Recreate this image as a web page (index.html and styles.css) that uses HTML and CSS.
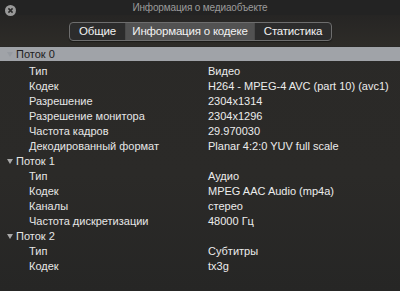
FILE: index.html
```html
<!DOCTYPE html>
<html lang="ru">
<head>
    <meta charset="UTF-8">
    <title>Информация о медиаобъекте</title>
    <link rel="stylesheet" href="styles.css">
</head>
<body>
    <div class="window">
        <div class="titlebar">
            <span class="close">
                <svg width="11" height="11" viewBox="0 0 11 11">
                    <circle cx="5.5" cy="5.5" r="5.5" fill="#9a9a9a"/>
                    <path d="M3.4 3.4 L7.6 7.6 M7.6 3.4 L3.4 7.6" stroke="#2a2a2a" stroke-width="1.5"/>
                </svg>
            </span>
            <span class="title">Информация о медиаобъекте</span>
        </div>
        <div class="toolbar">
            <div class="segments">
                <div class="segment seg-general">Общие</div>
                <div class="segment seg-codec selected">Информация о кодеке</div>
                <div class="segment seg-stats">Статистика</div>
            </div>
        </div>
        <div class="list">
            <div class="row group active"><span class="arrow"></span>Поток 0</div>
            <div class="row"><span class="key">Тип</span><span class="val">Видео</span></div>
            <div class="row"><span class="key">Кодек</span><span class="val">H264 - MPEG-4 AVC (part 10) (avc1)</span></div>
            <div class="row"><span class="key">Разрешение</span><span class="val">2304x1314</span></div>
            <div class="row"><span class="key">Разрешение монитора</span><span class="val">2304x1296</span></div>
            <div class="row"><span class="key">Частота кадров</span><span class="val">29.970030</span></div>
            <div class="row"><span class="key">Декодированный формат</span><span class="val">Planar 4:2:0 YUV full scale</span></div>
            <div class="row group"><span class="arrow"></span>Поток 1</div>
            <div class="row"><span class="key">Тип</span><span class="val">Аудио</span></div>
            <div class="row"><span class="key">Кодек</span><span class="val">MPEG AAC Audio (mp4a)</span></div>
            <div class="row"><span class="key">Каналы</span><span class="val">стерео</span></div>
            <div class="row"><span class="key">Частота дискретизации</span><span class="val">48000 Гц</span></div>
            <div class="row group"><span class="arrow"></span>Поток 2</div>
            <div class="row"><span class="key">Тип</span><span class="val">Субтитры</span></div>
            <div class="row"><span class="key">Кодек</span><span class="val">tx3g</span></div>
        </div>
    </div>
</body>
</html>
```

FILE: styles.css
```css
body {
    margin: 0;
    padding: 0;
    background-color: #262626;
    font-family: "Liberation Sans", Arial, sans-serif;
}
.window {
    width: 400px;
    height: 291px;
    overflow: hidden;
    background: linear-gradient(#2a2927, #2b2a28 60%, #262625);
}
.titlebar {
    height: 15px;
    display: flex;
    align-items: center;
    justify-content: center;
    position: relative;
    background-color: #232323;
}
.close {
    position: absolute;
    left: 5px;
    top: 2px;
    height: 11px;
}
.title {
    color: #9b9b9b;
    font-size: 10px;
    letter-spacing: -0.15px;
}
.toolbar {
    height: 31px;
    display: flex;
    justify-content: center;
    padding-top: 7px;
    box-sizing: border-box;
    background: linear-gradient(#262524, #2e2c28);
}
.segments {
    display: flex;
    height: 17px;
    margin-left: 1px;
    border: 1px solid #6e6e6e;
    border-radius: 4px;
    overflow: hidden;
    background-color: #2c2c2c;
    box-shadow: 0 1px 1px rgba(0, 0, 0, 0.4);
}
.segment {
    box-sizing: border-box;
    color: #f2f2f2;
    font-size: 11.5px;
    letter-spacing: -0.2px;
    line-height: 17px;
    text-align: center;
    white-space: nowrap;
    border-left: 1px solid #4a4a4a;
}
.seg-general {
    width: 55px;
    border-left: none;
}
.seg-codec {
    width: 129px;
}
.seg-stats {
    width: 77px;
}
.segment.selected {
    background-color: #525252;
}
.list {
    padding-top: 1px;
    font-size: 11px;
    color: #e6e6e6;
}
.row {
    height: 15px;
    line-height: 15px;
    display: flex;
    white-space: nowrap;
}
.row .key {
    width: 179px;
    padding-left: 29px;
}
.row .val {
    color: #ececec;
}
.group {
    padding-left: 6px;
}
.group.active {
    background-color: #a0a3a8;
    color: #202020;
    height: 14px;
    line-height: 14px;
    margin-bottom: 3px;
}
.arrow {
    width: 0;
    height: 0;
    margin: 5px 3px 0 1px;
    border-left: 3px solid transparent;
    border-right: 3px solid transparent;
    border-top: 5px solid #a8a8a8;
}
.group.active .arrow {
    border-top-color: #969aa0;
}
```
